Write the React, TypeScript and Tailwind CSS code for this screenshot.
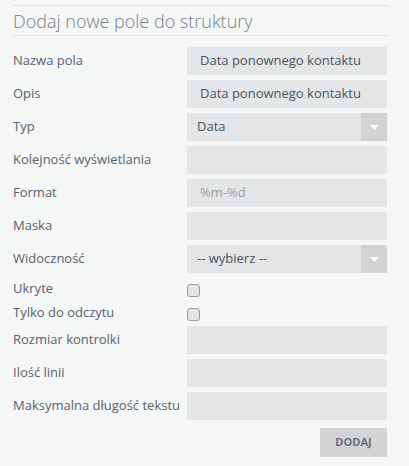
import React from "react";

type Row =
  | { kind: "input"; label: string; value?: string; placeholder?: string }
  | { kind: "select"; label: string; value: string }
  | { kind: "check"; label: string };

const rows: Row[] = [
  { kind: "input", label: "Nazwa pola", value: "Data ponownego kontaktu" },
  { kind: "input", label: "Opis", value: "Data ponownego kontaktu" },
  { kind: "select", label: "Typ", value: "Data" },
  { kind: "input", label: "Kolejność wyświetlania" },
  { kind: "input", label: "Format", placeholder: "%m-%d" },
  { kind: "input", label: "Maska" },
  { kind: "select", label: "Widoczność", value: "-- wybierz --" },
  { kind: "check", label: "Ukryte" },
  { kind: "check", label: "Tylko do odczytu" },
  { kind: "input", label: "Rozmiar kontrolki" },
  { kind: "input", label: "Ilość linii" },
  { kind: "input", label: "Maksymalna długość tekstu" },
];

function Field({ row }: { row: Row }) {
  if (row.kind === "check") {
    return (
      <div className="flex h-5 mt-1 first:mt-0">
        <div className="w-[174px] shrink-0 text-[13px] leading-5 text-[#58626d]">{row.label}</div>
        <div className="mt-[6px] h-[13px] w-[13px] rounded-[3px] border border-[#9c9c9c] bg-[#e4e4e4]" />
      </div>
    );
  }
  return (
    <div className="flex h-7 items-center mt-[5px]">
      <div className="w-[174px] shrink-0 text-[13px] text-[#58626d]">{row.label}</div>
      <div className="flex h-7 w-[200px] items-center bg-[#e3e5e6]">
        {row.kind === "select" ? (
          <>
            <span className="flex-1 pl-[10px] text-[13px] text-[#4b5560]">{row.value}</span>
            <span className="flex h-full w-[26px] items-center justify-center bg-[#d1d2d4]">
              <svg width="9" height="5" viewBox="0 0 9 5">
                <path d="M0 0h9L4.5 5z" fill="#ffffff" />
              </svg>
            </span>
          </>
        ) : row.value ? (
          <span className="pl-[13px] text-[13px] text-[#4b5560]">{row.value}</span>
        ) : row.placeholder ? (
          <span className="pl-[13px] text-[13px] text-[#9aa1a8]">{row.placeholder}</span>
        ) : null}
      </div>
    </div>
  );
}

export default function App() {
  return (
    <div className="min-h-[466px] w-[409px] bg-[#f5f6f6] px-[13px] pt-[5px] font-['Open_Sans',sans-serif]">
      <div className="w-[376px] border-t border-[#e2e3e4]">
        <h2 className="h-[30px] border-b border-[#e2e3e4] text-[18px] font-light leading-[30px] text-[#74808c]">
          Dodaj nowe pole do struktury
        </h2>
      </div>
      <div className="pt-[6px]">
        {rows.slice(0, 7).map((r) => (
          <Field key={r.label} row={r} />
        ))}
        <div className="mt-[5px]">
          {rows.slice(7, 9).map((r) => (
            <Field key={r.label} row={r} />
          ))}
        </div>
        <div className="-mt-px">
          {rows.slice(9).map((r) => (
            <Field key={r.label} row={r} />
          ))}
        </div>
        <div className="mt-2 flex w-[374px] justify-end">
          <button
            type="button"
            className="h-[29px] w-[67px] bg-[#d4d4d4] text-[11px] font-bold text-[#66717d]"
          >
            DODAJ
          </button>
        </div>
      </div>
    </div>
  );
}
